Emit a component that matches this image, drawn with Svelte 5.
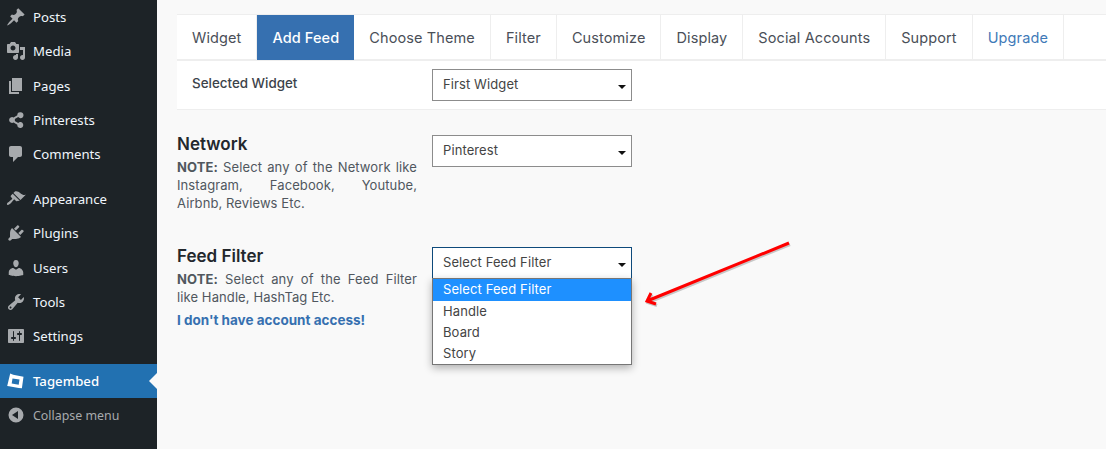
<script lang="ts">
  // Dashicon paths, 20x20 viewBox
  const ICONS: Record<string, string> = {
    post: 'M10.44 3.02l1.82-1.82 6.36 6.35-1.83 1.82c-1.05-.68-2.48-.57-3.41.36l-.75.75c-.92.93-1.04 2.35-.35 3.41l-1.83 1.82-2.41-2.41-2.8 2.79c-.42.42-3.38 2.71-3.8 2.29s1.86-3.39 2.28-3.81l2.79-2.79L4.1 9.36l1.83-1.82c1.05.69 2.48.57 3.4-.36l.75-.75c.93-.92 1.05-2.35.36-3.41z',
    media: 'M13 11V4c0-.55-.45-1-1-1h-1.67L9 1H5L3.67 3H2c-.55 0-1 .45-1 1v7c0 .55.45 1 1 1h10c.55 0 1-.45 1-1zM7 4.5c1.38 0 2.5 1.12 2.5 2.5S8.38 9.5 7 9.5 4.5 8.38 4.5 7 5.62 4.5 7 4.5zM14 6h5v10.5c0 1.38-1.12 2.5-2.5 2.5S14 17.88 14 16.5s1.12-2.5 2.5-2.5c.17 0 .34.02.5.05V9h-3V6zm-4 8.05V13h2v3.5c0 1.38-1.12 2.5-2.5 2.5S7 17.88 7 16.5 8.12 14 9.5 14c.17 0 .34.02.5.05z',
    pages: 'M6 15V2h10v13H6zm-1 1h8v2H3V5h2v11z',
    share: 'M14.5 2.2a3 3 0 1 1-2.3 4.9L8.8 9a3 3 0 0 1 0 2l3.4 1.9a3 3 0 1 1-.9 1.8L7.6 12.6a3 3 0 1 1 0-5.2l3.7-2.1a3 3 0 0 1 3.2-3.1z',
    comments: 'M5 2h9c1.1 0 2 .9 2 2v7c0 1.1-.9 2-2 2h-2l-5 5v-5H5c-1.1 0-2-.9-2-2V4c0-1.1.9-2 2-2z',
    appearance: 'M14.48 11.06L7.41 3.99l1.5-1.5c.5-.56 2.3-.47 3.51.32 1.21.8 1.43 1.28 2.91 2.1 1.18.64 2.45 1.26 4.45.85zm-.71.71L6.7 4.7 4.93 6.47c-.39.39-.39 1.02 0 1.41l1.06 1.06c.39.39.39 1.03 0 1.42-.6.6-1.43 1.11-2.21 1.69-.35.26-.7.53-1.01.84C1.43 13.23.4 14.89 1.2 15.7c.8.8 2.46-.23 3.82-1.58.31-.31.58-.66.85-1.02.57-.78 1.08-1.61 1.69-2.21.39-.39 1.02-.39 1.41 0l1.06 1.06c.39.39 1.02.39 1.41 0z',
    plugins: 'M13.11 4.36L9.87 7.6 8 5.73l3.24-3.24c.35-.34 1.05-.2 1.56.32.52.51.66 1.21.31 1.55zm-8 1.77l.91-1.12 9.01 9.01-1.19.84c-.71.71-2.63 1.16-3.82 1.16H6.14L4.9 17.26c-.59.59-1.54.59-2.12 0-.59-.58-.59-1.53 0-2.12l1.24-1.24v-3.88c0-1.13.4-3.19 1.09-3.89zm7.26 3.97l3.24-3.24c.34-.35 1.04-.21 1.55.31.52.51.66 1.21.31 1.55l-3.24 3.25z',
    users: 'M10 9.25c-2.27 0-2.73-3.44-2.73-3.44C7 4.02 7.82 2 9.97 2c2.16 0 2.98 2.02 2.71 3.81 0 0-.41 3.44-2.68 3.44zm0 2.57L12.72 10c2.39 0 4.52 2.33 4.52 4.53v2.49s-3.65 1.13-7.24 1.13c-3.65 0-7.24-1.13-7.24-1.13v-2.49c0-2.25 1.94-4.48 4.47-4.48z',
    tools: 'M16.68 9.77c-1.34 1.34-3.3 1.67-4.95.99l-5.41 6.52c-.99.99-2.59.99-3.58 0s-.99-2.59 0-3.57l6.52-5.42c-.68-1.65-.35-3.61.99-4.95 1.28-1.28 3.12-1.62 4.72-1.06l-2.89 2.89 2.82 2.82 2.86-2.87c.53 1.58.18 3.39-1.08 4.65zM3.81 16.21c.4.39 1.04.39 1.43 0 .4-.4.4-1.04 0-1.43-.39-.4-1.03-.4-1.43 0-.39.39-.39 1.03 0 1.43z',
    settings: 'M18 16V4c0-.55-.45-1-1-1H3c-.55 0-1 .45-1 1v12c0 .55.45 1 1 1h14c.55 0 1-.45 1-1zM8 11h1c.55 0 1 .45 1 1s-.45 1-1 1H8v1.5c0 .28-.22.5-.5.5s-.5-.22-.5-.5V13H6c-.55 0-1-.45-1-1s.45-1 1-1h1V5.5c0-.28.22-.5.5-.5s.5.22.5.5V11zm5-2h-1c-.55 0-1-.45-1-1s.45-1 1-1h1V5.5c0-.28.22-.5.5-.5s.5.22.5.5V7h1c.55 0 1 .45 1 1s-.45 1-1 1h-1v5.5c0 .28-.22.5-.5.5s-.5-.22-.5-.5V9z',
    tagembed: 'M4.2 2.5l3 1.2 10.3 2-1.6 11.5-3.2-.3-9.7-1.6-1.8-.3zM6.5 7.5l-.8 5 7 1.2.8-5.2z',
    collapse: 'M10 2.5a7.5 7.5 0 1 0 0 15 7.5 7.5 0 0 0 0-15zM12 14L6 10l6-4z'
  }

  const GROUPS = [
    [
      { label: 'Posts', icon: 'post' },
      { label: 'Media', icon: 'media' },
      { label: 'Pages', icon: 'pages' },
      { label: 'Pinterests', icon: 'share' },
      { label: 'Comments', icon: 'comments' }
    ],
    [
      { label: 'Appearance', icon: 'appearance' },
      { label: 'Plugins', icon: 'plugins' },
      { label: 'Users', icon: 'users' },
      { label: 'Tools', icon: 'tools' },
      { label: 'Settings', icon: 'settings' }
    ]
  ]

  const TABS = ['Widget', 'Add Feed', 'Choose Theme', 'Filter', 'Customize', 'Display', 'Social Accounts', 'Support', 'Upgrade']
  const FILTERS = ['Select Feed Filter', 'Handle', 'Board', 'Story']
</script>

<div class="admin">
  <nav class="sidebar">
    {#each GROUPS as group}
      <ul class="menu-group">
        {#each group as item}
          <li class="menu-item">
            <svg class="menu-icon" viewBox="0 0 20 20" aria-hidden="true"><path fill-rule="evenodd" d={ICONS[item.icon]} /></svg>
            {item.label}
          </li>
        {/each}
      </ul>
    {/each}
    <div class="menu-item current">
      <svg class="menu-icon" viewBox="0 0 20 20" aria-hidden="true"><path fill-rule="evenodd" d={ICONS.tagembed} /></svg>
      Tagembed
    </div>
    <div class="menu-item collapse">
      <svg class="menu-icon" viewBox="0 0 20 20" aria-hidden="true"><path fill-rule="evenodd" d={ICONS.collapse} /></svg>
      Collapse menu
    </div>
  </nav>

  <main class="content">
    <div class="panel">
      <div class="tabs">
        {#each TABS as tab}
          <span class="tab" class:active={tab === 'Add Feed'} class:upgrade={tab === 'Upgrade'}>{tab}</span>
        {/each}
      </div>
      <div class="widget-row">
        <span class="widget-label">Selected Widget</span>
        <div class="select">First Widget</div>
      </div>
    </div>

    <section class="field network">
      <div class="field-info">
        <h3>Network</h3>
        <p><b>NOTE:</b> Select any of the Network like Instagram, Facebook, Youtube, Airbnb, Reviews Etc.</p>
      </div>
      <div class="select">Pinterest</div>
    </section>

    <section class="field">
      <div class="field-info">
        <h3>Feed Filter</h3>
        <p><b>NOTE:</b> Select any of the Feed Filter like Handle, HashTag Etc.</p>
        <span class="access-link">I don't have account access!</span>
      </div>
      <div class="select-wrap">
        <div class="select open">Select Feed Filter</div>
        <ul class="dropdown">
          {#each FILTERS as opt, i}
            <li class:highlighted={i === 0}>{opt}</li>
          {/each}
        </ul>
      </div>
      <svg class="arrow" width="150" height="68" viewBox="0 0 150 68" aria-hidden="true">
        <path d="M144 2L2 60M6 52L2 60L11 63" fill="none" stroke="#8a8a8a" stroke-opacity=".45" stroke-width="3" transform="translate(1 1.5)" />
        <path d="M144 2L2 60M6 52L2 60L11 63" fill="none" stroke="#f00" stroke-width="3" />
      </svg>
    </section>
  </main>
</div>

<style>
  :global(body) {
    margin: 0;
    background: #f9f9f9;
  }

  .admin {
    display: flex;
    height: 449px;
    overflow: hidden;
  }

  /* --- sidebar --- */
  .sidebar {
    width: 157px;
    flex-shrink: 0;
    background: #1d2327;
    font-family: 'Noto Sans', sans-serif;
    font-size: 13.2px;
    color: #f0f6fc;
  }

  .menu-group {
    list-style: none;
    margin: 0 0 10.5px;
    padding: 0;
  }

  .menu-item {
    display: flex;
    align-items: center;
    gap: 7px;
    height: 34.3px;
    padding-left: 6px;
    box-sizing: border-box;
  }

  .menu-icon {
    width: 20px;
    height: 20px;
    fill: #a7aaad;
    flex-shrink: 0;
  }

  .current {
    position: relative;
    background: #2271b1;
    color: #fff;
    font-weight: 500;
  }

  .current .menu-icon {
    fill: #fff;
  }

  .current::after {
    content: '';
    position: absolute;
    right: 0;
    top: 50%;
    margin-top: -8px;
    border: 8px solid transparent;
    border-right-color: #f9f9f9;
    border-left: 0;
  }

  .collapse {
    color: #a7aaad;
    font-size: 12.4px;
  }

  /* --- content --- */
  .content {
    flex: 1;
    min-width: 0;
    padding: 14px 0 0 20px;
    font-family: Inter, 'Open Sans', sans-serif;
    color: #444;
  }

  .panel {
    background: #fff;
    border-bottom: 1px solid #eee;
  }

  .tabs {
    display: flex;
    height: 47px;
    box-sizing: border-box;
    border-top: 1px solid #eee;
    border-bottom: 2px solid #eee;
    font-size: 14.5px;
    letter-spacing: 0.11px;
    color: #4a4f58;
  }

  .tab {
    display: flex;
    align-items: center;
    padding: 0 15px;
    border-right: 1px solid #eee;
  }

  .tab.active {
    background: #3670b0;
    color: #fff;
    font-weight: 500;
    border-right: 0;
    margin-bottom: -1px;
  }

  .tab.upgrade {
    color: #3f7ab8;
  }

  .widget-row {
    display: flex;
    align-items: flex-start;
    height: 48px;
    padding-top: 8px;
    box-sizing: border-box;
  }

  .widget-label {
    width: 240px;
    padding-left: 15px;
    margin-right: 15px;
    box-sizing: border-box;
    font-size: 13.4px;
    font-weight: 500;
    line-height: 28px;
    color: #3c434a;
  }

  .select {
    position: relative;
    width: 200px;
    height: 32px;
    box-sizing: border-box;
    padding: 0 10px;
    background: #fff;
    border: 1px solid #8c8c8c;
    font-size: 13px;
    letter-spacing: 0.1px;
    line-height: 29px;
    color: #444;
  }

  .select::after {
    content: '';
    position: absolute;
    right: 5px;
    top: 15px;
    border: 4px solid transparent;
    border-top-color: #111;
    border-bottom: 0;
  }

  .select.open {
    border-color: #0e4a7b;
  }

  .field {
    position: relative;
    display: flex;
    gap: 15px;
    align-items: flex-start;
  }

  .field.network {
    margin: 25px 0 36px;
    height: 76px;
  }

  .field-info {
    width: 240px;
  }

  h3 {
    margin: -1px 0 0;
    font-size: 17px;
    font-weight: 600;
    line-height: 20px;
    color: #23282d;
  }

  p {
    margin: 4px 0 0;
    font-size: 13px;
    letter-spacing: 0.1px;
    line-height: 18px;
    text-align: justify;
    color: #50575e;
  }

  p b {
    font-weight: 700;
  }

  .access-link {
    display: block;
    margin-top: 6px;
    font-size: 13.5px;
    font-weight: 700;
    color: #3670b0;
  }

  .select-wrap {
    position: relative;
    width: 200px;
  }

  .dropdown {
    position: absolute;
    top: 31px;
    left: 0;
    width: 200px;
    box-sizing: border-box;
    margin: 0;
    padding: 0;
    list-style: none;
    background: #fff;
    border: 1px solid #767676;
    box-shadow: 0 3px 8px rgba(0, 0, 0, 0.3);
    font-size: 13px;
    letter-spacing: 0.1px;
    color: #444;
  }

  .dropdown li {
    height: 21px;
    padding: 0 10px;
    line-height: 20px;
  }

  .dropdown li.highlighted {
    height: 22px;
    line-height: 21px;
    background: #1e90ff;
    color: #fff;
  }

  .arrow {
    position: absolute;
    left: 468px;
    top: -6px;
    overflow: visible;
  }
</style>
